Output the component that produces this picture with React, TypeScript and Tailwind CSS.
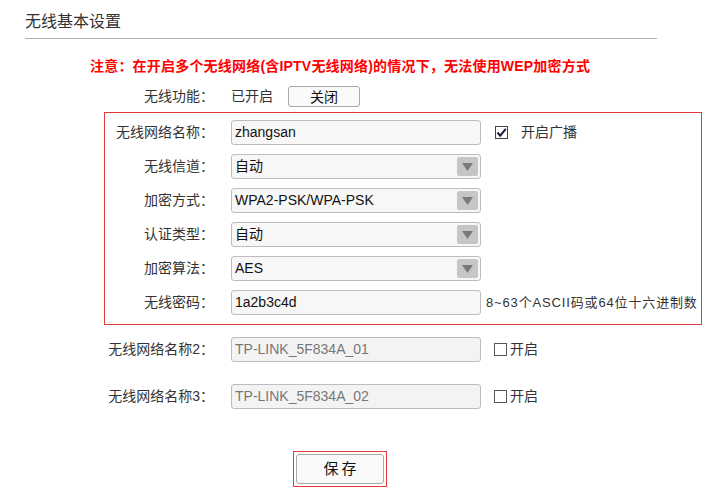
import React from "react";

const F = { fontFamily: '"Liberation Sans", "Noto Sans CJK SC", sans-serif' };

function Arrow() {
  return (
    <div className="absolute right-[2px] top-[2px] bottom-[2px] w-[21px] bg-[#c6c6c6] rounded-[2px] flex items-center justify-center">
      <svg width="11" height="8" viewBox="0 0 11 8">
        <polygon points="0,0 11,0 5.5,8" fill="#7a7a7a" />
      </svg>
    </div>
  );
}

function Field({ value, select, disabled }: { value: string; select?: boolean; disabled?: boolean }) {
  return (
    <div
      className={
        "relative w-[250px] h-[25px] border border-[#bdbdbd] rounded-[3px] flex items-center pl-[3px] text-[14px] " +
        (disabled ? "bg-[#f3f3f3] text-[#777]" : "bg-[#f7f7f7] text-[#111]")
      }
    >
      <span>{value}</span>
      {select && <Arrow />}
    </div>
  );
}

function Label({ children }: { children: React.ReactNode }) {
  return <div className="w-[109px] shrink-0 text-right text-[14px] text-[#333] pr-0 mr-[17px]">{children}</div>;
}

function Row({ label, children }: { label: React.ReactNode; children: React.ReactNode }) {
  return (
    <div className="flex items-center h-[25px]">
      <Label>{label}</Label>
      {children}
    </div>
  );
}

export default function App() {
  return (
    <div style={F} className="w-[707px] h-[489px] bg-white text-[#333] relative overflow-hidden">
      <div className="ml-[25px] w-[632px] pt-[12px] h-[39px] border-b border-[#b0b0b0] text-[16px] text-[#333] leading-[20px]">
        无线基本设置
      </div>
      <div className="ml-[90px] mt-[18px] text-[14px] font-bold text-[#ff0000] leading-[18px] tracking-[0.2px] whitespace-nowrap">
        注意：在开启多个无线网络(含IPTV无线网络)的情况下，无法使用WEP加密方式
      </div>
      <div className="ml-[105px] mt-[11px] flex items-center h-[21px]">
        <Label>无线功能：</Label>
        <span className="text-[14px] text-[#333]">已开启</span>
        <button className="ml-[15px] w-[72px] h-[21px] border border-[#aaa] rounded-[3px] bg-[#fafafa] text-[14px] text-[#111] leading-none flex items-center justify-center">
          关闭
        </button>
      </div>
      <div className="ml-[104px] mt-[5px] w-[598px] border border-[#e8393a] pt-[7px] pb-[9px] flex flex-col gap-[9px]">
        <Row label="无线网络名称：">
          <Field value="zhangsan" />
          <div className="ml-[14px] w-[13px] h-[13px] border border-[#444] bg-white flex items-center justify-center">
            <svg width="11" height="11" viewBox="0 0 11 11">
              <path d="M1.5 5.5 L4.2 8.6 L9.8 1.8" stroke="#1b1b3c" strokeWidth="2" fill="none" />
            </svg>
          </div>
          <span className="ml-[13px] text-[14px] text-[#333]">开启广播</span>
        </Row>
        <Row label="无线信道：">
          <Field value="自动" select />
        </Row>
        <Row label="加密方式：">
          <Field value="WPA2-PSK/WPA-PSK" select />
        </Row>
        <Row label="认证类型：">
          <Field value="自动" select />
        </Row>
        <Row label="加密算法：">
          <Field value="AES" select />
        </Row>
        <Row label="无线密码：">
          <Field value="1a2b3c4d" />
          <span className="ml-[5px] text-[13px] tracking-[0.85px] text-[#333] whitespace-nowrap">8~63个ASCII码或64位十六进制数</span>
        </Row>
      </div>
      <div className="ml-[105px] mt-[12px] flex flex-col gap-[22px]">
        {["TP-LINK_5F834A_01", "TP-LINK_5F834A_02"].map((v, i) => (
          <Row key={v} label={"无线网络名称" + (i + 2) + "："}>
            <Field value={v} disabled />
            <div className="ml-[13px] w-[13px] h-[13px] border border-[#555] bg-white" />
            <span className="ml-[3px] text-[14px] text-[#333]">开启</span>
          </Row>
        ))}
      </div>
      <div className="mt-[42px] ml-[293px] w-[94px] h-[36px] border border-[#e8393a] p-[2px]">
        <button className="w-full h-full border border-[#aaa] rounded-[3px] bg-[#fafafa] text-[15px] tracking-[3px] text-[#111] flex items-center justify-center pl-[3px]">
          保存
        </button>
      </div>
    </div>
  );
}
